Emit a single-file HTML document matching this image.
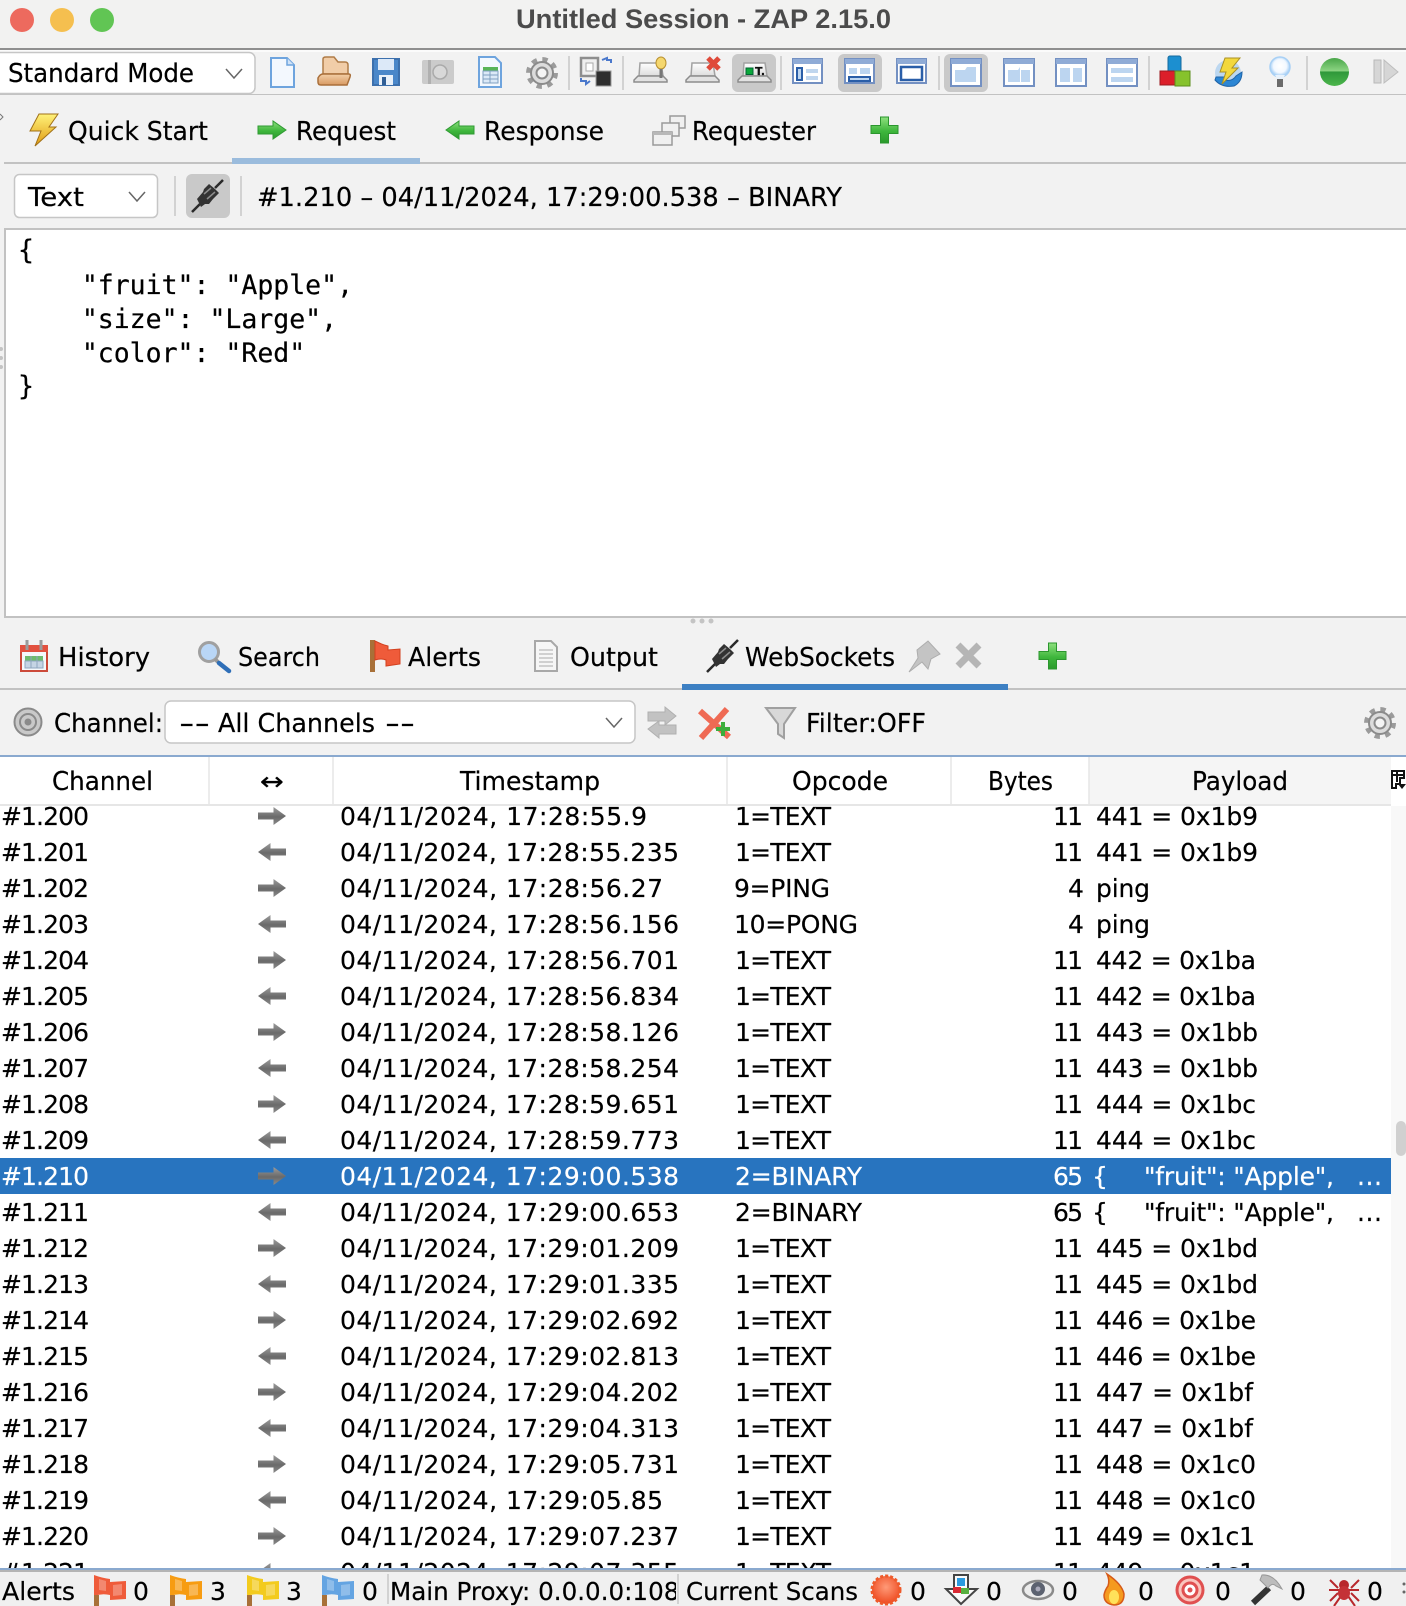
<!DOCTYPE html>
<html><head><meta charset="utf-8"><title>Untitled Session - ZAP 2.15.0</title>
<style>
html,body{margin:0;padding:0;background:#f2f2f2;width:1406px;height:1606px;overflow:hidden}
svg{display:block;position:absolute;left:0;top:0}
text{font-family:"DejaVu Sans","Liberation Sans",sans-serif;font-size:25px;fill:#000;stroke:#000;stroke-width:.2px;white-space:pre}
.t{font-size:26px}
.m{font-family:"DejaVu Sans Mono","Liberation Mono",monospace;font-size:26.5px;fill:#000}
.w text{fill:#fff;stroke:#fff}
</style></head><body>
<svg width="1406" height="1606" viewBox="0 0 1406 1606" xmlns="http://www.w3.org/2000/svg">
<defs>
<linearGradient id="gg" x1="0" y1="0" x2="0" y2="1"><stop offset="0" stop-color="#9c9c9c"/><stop offset=".55" stop-color="#6a6a6a"/><stop offset="1" stop-color="#8a8a8a"/></linearGradient>
<linearGradient id="gr" x1="0" y1="0" x2="0" y2="1"><stop offset="0" stop-color="#8fe07f"/><stop offset=".55" stop-color="#3eb63c"/><stop offset="1" stop-color="#2b9a2c"/></linearGradient>
<linearGradient id="fol" x1="0" y1="0" x2="0" y2="1"><stop offset="0" stop-color="#f3cfa8"/><stop offset="1" stop-color="#d89a62"/></linearGradient>
<linearGradient id="bolt" x1="0" y1="0" x2="0" y2="1"><stop offset="0" stop-color="#fff27a"/><stop offset="1" stop-color="#e09a10"/></linearGradient>
<linearGradient id="grn" x1="0" y1="0" x2="0" y2="1"><stop offset="0" stop-color="#49a649"/><stop offset=".46" stop-color="#8bd482"/><stop offset=".5" stop-color="#2f983a"/><stop offset="1" stop-color="#4cb64c"/></linearGradient>
<linearGradient id="lapg" x1="0" y1="0" x2="0" y2="1"><stop offset="0" stop-color="#fff"/><stop offset="1" stop-color="#dcdcdc"/></linearGradient>
<radialGradient id="bst" cx=".5" cy=".4" r=".6"><stop offset="0" stop-color="#ff9a78"/><stop offset="1" stop-color="#ee4a20"/></radialGradient>
<radialGradient id="bulb" cx=".5" cy=".45" r=".55"><stop offset="0" stop-color="#fff"/><stop offset=".6" stop-color="#f2f8ff"/><stop offset="1" stop-color="#8ec2f2"/></radialGradient>
<g id="R"><path d="M0 5.500H15.500V0L28 9 15.500 18V12.500H0Z" fill="url(#gg)"/></g>
<g id="L"><path d="M28 5.500H12.500V0L0 9 12.500 18V12.500H28Z" fill="url(#gg)"/></g>
<g id="plus"><path d="M10.500 1H18.500V9.500H28V17.500H18.500V27H10.500V17.500H1V9.500H10.500Z" fill="url(#gr)" stroke="#2b962e" stroke-width="1"/></g>
<g id="gear"><circle cx="16" cy="16" r="13" fill="none" stroke="#9b9b9b" stroke-width="6" stroke-dasharray="5 5.200"/><circle cx="16" cy="16" r="11" fill="#dcdcdc" stroke="#8b8b8b" stroke-width="2"/><circle cx="16" cy="16" r="5.500" fill="#f4f4f4" stroke="#8b8b8b" stroke-width="2"/></g>
<g id="plug"><path d="M1 33L9 25M32 1L24 9" stroke="#2a2a2a" stroke-width="2.500"/><path d="M6 20L12 13 13 10 18 5 24 10 28 14 22 20 18 25 14 25 10 28Z" fill="#333"/><path d="M13 15L20 9M16 20L24 13" stroke="#8d8d8d" stroke-width="1.500"/></g>
<g id="lap"><path d="M6 1H27L29 14H5Z" fill="url(#lapg)" stroke="#a2a2a2" stroke-width="1.500"/><path d="M4 14H29L33 18V20H0V18Z" fill="#e2e2e2" stroke="#8c8c8c" stroke-width="1.500"/></g>
<g id="lay"><rect x="1" y="1" width="29" height="24" fill="#fff" stroke="#7390c2" stroke-width="2"/><rect x="1" y="1" width="29" height="5" fill="#8fabd6"/></g>
<g id="lay2"><rect x="1" y="1" width="30" height="27" fill="#fff" stroke="#7390c2" stroke-width="2"/><rect x="1" y="1" width="30" height="5" fill="#8fabd6"/></g>
<g id="flagw"><path d="M5 4L12 6V16L5 15ZM19 10L28 9V20L19 21Z" fill="#fff" opacity=".28"/><rect x="0" y="20" width="5" height="11" fill="#a87038"/></g>
<path id="flagp" d="M0 0Q8 3 16 4V7L32 6V24L16 25V20Q8 18 0 21Z"/>
</defs>

<!-- title bar -->
<rect width="1406" height="48" fill="#f2f2f1"/>
<ellipse cx="22" cy="20" rx="12" ry="12" fill="#ed6a5e"/>
<ellipse cx="62" cy="20" rx="12" ry="12" fill="#f5bf4f"/>
<ellipse cx="102" cy="20" rx="12" ry="12" fill="#61c554"/>
<text x="516" y="28" textLength="375" lengthAdjust="spacingAndGlyphs" style="font-family:'Liberation Sans',sans-serif;font-weight:700;font-size:27px;fill:#4b4b4b;stroke:none">Untitled Session - ZAP 2.15.0</text>
<rect y="48" width="1406" height="2" fill="#8f8f8f"/>
<rect y="50" width="1406" height="2" fill="#fbfbfb"/>
<rect y="52" width="1406" height="42" fill="#f2f2f2"/>
<rect y="94" width="1406" height="1.500" fill="#c2c2c2"/>

<!-- mode select -->
<rect x="-6" y="52.500" width="261" height="41" rx="6" fill="#fff" stroke="#c6c6c6" stroke-width="1.500"/>
<text class="t" x="8" y="82" textLength="186" lengthAdjust="spacingAndGlyphs">Standard Mode</text>
<path d="M226 69L234 78 242 69" fill="none" stroke="#666" stroke-width="1.500"/>

<!-- toolbar selected backgrounds -->
<rect x="732" y="54" width="44" height="38" rx="6" fill="#c9c9c9"/>
<rect x="838" y="54" width="44" height="38" rx="6" fill="#c9c9c9"/>
<rect x="944" y="54" width="44" height="38" rx="6" fill="#c9c9c9"/>
<g stroke="#c8c8c8" stroke-width="1.500"><path d="M569 56V90M623 56V90M781 56V90M939 56V90M1149 56V90M1307 56V90"/></g>

<!-- toolbar icons -->
<path d="M271 58H287L294 65V87H271Z" fill="#f3f8fe" stroke="#6ea4de" stroke-width="2"/><path d="M287 58V65H294" fill="#cfe2f7" stroke="#6ea4de" stroke-width="1.500"/>
<path d="M323 59Q323 57 326 57H334L338 62H345Q348 62 348 65V74H323Z" fill="#f1cda8" stroke="#b07c48" stroke-width="1.500"/><path d="M318 78Q320 74 323 74H349Q351 74 350 77L347 85H321Q318 85 318 82Z" fill="url(#fol)" stroke="#a96f3a" stroke-width="1.500"/>
<path d="M373 59H399V85H373Z" fill="#4a87c9" stroke="#3c70ad" stroke-width="2"/><rect x="378" y="59" width="16" height="11" fill="#dce9f8"/><rect x="379" y="75" width="14" height="10" fill="#e8f0f9"/><rect x="382" y="77" width="4" height="8" fill="#2f5e96"/>
<rect x="422" y="60" width="32" height="24" rx="2" fill="#cbcbcb"/><rect x="428" y="60" width="3" height="24" fill="#b0b0b0"/><circle cx="440" cy="72" r="7" fill="#d8d8d8" stroke="#aaa" stroke-width="1.500"/>
<path d="M479 57H495L501 63V87H479Z" fill="#f3f8fe" stroke="#6ea4de" stroke-width="2"/><rect x="483" y="67" width="15" height="4" fill="#58b458"/><path d="M483 71H498V83H483ZM483 75H498M483 79H498M490 71V83" fill="#dbe9f7" stroke="#7f9fc0" stroke-width="1"/>
<use href="#gear" x="526" y="57"/>
<rect x="581" y="58" width="17" height="18" fill="#f0f0f0" stroke="#8e8e8e" stroke-width="2.500"/><rect x="586" y="63" width="7" height="8" fill="#fff" stroke="#aaa"/><rect x="596" y="71" width="15" height="15" fill="#2e2e2e" stroke="#9a9a9a"/><path d="M602 60L607 58V60H611V63M581 78V81H586V84L590 81" fill="none" stroke="#4a78cc" stroke-width="2"/>
<g transform="translate(634 62)"><use href="#lap"/><ellipse cx="27" cy="1" rx="5" ry="6" fill="#f5d76e" stroke="#b89030"/><rect x="25.500" y="7" width="3" height="9" fill="#777"/></g>
<g transform="translate(686 62)"><use href="#lap"/><path d="M22 -4L33 7M33 -4L22 7" stroke="#df4a3a" stroke-width="5"/></g>
<g transform="translate(738 62)"><use href="#lap"/><rect x="8" y="6" width="7" height="6.500" fill="#0aa83a" stroke="#063"/><text x="17" y="13" style="font-size:11px;font-weight:700;fill:#111">T.</text></g>
<g transform="translate(792 58)"><use href="#lay"/><rect x="5" y="10" width="5" height="12" fill="#bcd5f0" stroke="#2a5ea8" stroke-width="2"/><path d="M14 11H26V15H14ZM14 18H26V22H14Z" fill="#c0d6ee"/></g>
<g transform="translate(844 58)"><use href="#lay"/><path d="M5 10H13V16H5ZM16 10H26V16H16Z" fill="#bcd5f0"/><rect x="5" y="19" width="21" height="4" fill="#bcd5f0" stroke="#2a5ea8" stroke-width="2"/></g>
<g transform="translate(896 58)"><use href="#lay"/><rect x="5" y="9" width="21" height="13" fill="#fff" stroke="#2a5ea8" stroke-width="2.500"/></g>
<g transform="translate(950 58)"><use href="#lay2"/><path d="M5 12H15L17 9H26V24H5Z" fill="#bcd5f0"/></g>
<g transform="translate(1003 58)"><use href="#lay2"/><path d="M5 12H15L17 9V24H5ZM18 12H27V24H18Z" fill="#bcd5f0"/></g>
<g transform="translate(1055 58)"><use href="#lay2"/><path d="M5 10H15V24H5ZM18 10H27V24H18Z" fill="#bcd5f0"/></g>
<g transform="translate(1106 58)"><use href="#lay2"/><path d="M5 10H27V15H5ZM5 19H27V24H5Z" fill="#bcd5f0"/></g>
<rect x="1168" y="56" width="13" height="17" rx="2" fill="#1c8fd0" stroke="#156a9e"/><rect x="1160" y="71" width="15" height="14" fill="#dc1f2a" stroke="#9c1a20"/><rect x="1175" y="71" width="15" height="15" fill="#86c22c" stroke="#5c8f1c"/>
<circle cx="1228" cy="73" r="13" fill="#bcd7f0"/><path d="M1215 80Q1222 88 1234 86 1242 82 1242 72L1236 76Q1232 82 1224 80L1226 77H1216Z" fill="#2c86d4" stroke="#1f64a8"/><path d="M1225 58H1240L1232 68H1238L1222 84 1226 72H1220Z" fill="#f3d83d" stroke="#a99024"/>
<circle cx="1280" cy="67" r="10" fill="url(#bulb)" stroke="#a8d0f5" stroke-width="1.500"/><path d="M1275 75Q1277 78 1277 80H1283Q1283 78 1285 75Z" fill="#e8f2fc"/><rect x="1277" y="79" width="6" height="8" fill="#6b6b6b"/>
<ellipse cx="1334.500" cy="72" rx="14.500" ry="14" fill="url(#grn)"/>
<rect x="1374" y="60" width="7" height="23" fill="#d6d6d6" stroke="#b8b8b8"/><path d="M1384 60L1398 72 1384 83Z" fill="#d6d6d6" stroke="#bdbdbd"/>

<!-- top tabs -->
<rect y="95" width="1406" height="69" fill="#f2f2f2"/>
<path d="M0 114L3 117 0 120" fill="none" stroke="#777" stroke-width="1"/>
<path d="M39 114H58L49 127H56L35 146 41 131H30Z" fill="url(#bolt)" stroke="#a07018" stroke-width="1"/>
<text class="t" x="68" y="140" textLength="140" lengthAdjust="spacingAndGlyphs">Quick Start</text>
<path d="M258 126H273V121L286 130 273 139V134H258Z" fill="url(#gr)" stroke="#2f9a33" stroke-width="1"/>
<text class="t" x="296" y="140" textLength="100" lengthAdjust="spacingAndGlyphs">Request</text>
<path d="M474 126H459V121L446 130 459 139V134H474Z" fill="url(#gr)" stroke="#2f9a33" stroke-width="1"/>
<text class="t" x="484" y="140" textLength="120" lengthAdjust="spacingAndGlyphs">Response</text>
<g fill="#f0f0f0" stroke="#9a9a9a" stroke-width="1.500"><rect x="670" y="116" width="15" height="12"/><rect x="662" y="123" width="17" height="13"/><rect x="653" y="132" width="19" height="13"/></g><rect x="653" y="132" width="19" height="3" fill="#b8b8b8"/>
<text class="t" x="692" y="140" textLength="124" lengthAdjust="spacingAndGlyphs">Requester</text>
<use href="#plus" x="870" y="116"/>
<rect x="4" y="162" width="1402" height="2" fill="#c2c2c2"/>
<rect x="232" y="158" width="188" height="6" fill="#9bbcdd"/>

<!-- sub toolbar -->
<rect x="14.500" y="174.500" width="143" height="43" rx="5" fill="#fff" stroke="#c6c6c6" stroke-width="1.500"/>
<text class="t" x="28" y="206" textLength="56" lengthAdjust="spacingAndGlyphs">Text</text>
<path d="M129 192L137 201 145 192" fill="none" stroke="#666" stroke-width="1.500"/>
<path d="M175 176V216M241 176V216" stroke="#c8c8c8" stroke-width="1.500"/>
<rect x="186" y="174" width="44" height="44" rx="6" fill="#c9c9c9"/>
<use href="#plug" x="191" y="179"/>
<text class="t" x="257" y="206" textLength="585" lengthAdjust="spacingAndGlyphs">#1.210 – 04/11/2024, 17:29:00.538 – BINARY</text>

<!-- editor -->
<rect x="5" y="229" width="1402" height="388" fill="#fff" stroke="#c2c2c2" stroke-width="2"/>
<text class="m" x="18" y="259">{</text>
<text class="m" x="18" y="294">    "fruit": "Apple",</text>
<text class="m" x="18" y="328">    "size": "Large",</text>
<text class="m" x="18" y="362">    "color": "Red"</text>
<text class="m" x="18" y="395">}</text>
<g fill="#c4c4c4"><circle cx="1" cy="349" r="2"/><circle cx="1" cy="358" r="2"/><circle cx="1" cy="367" r="2"/><circle cx="693" cy="621" r="2.500"/><circle cx="702" cy="621" r="2.500"/><circle cx="711" cy="621" r="2.500"/></g>

<!-- bottom tabs -->
<rect x="21" y="646" width="26" height="25" fill="#f4f8fb" stroke="#cc4a3a" stroke-width="2"/><rect x="20" y="645" width="28" height="7" fill="#e2513f"/><rect x="25" y="656" width="18" height="5" fill="#6ebb6e"/><path d="M25 661H43V668H25ZM31 656V668M37 656V668" fill="#c5d4e4" stroke="#8fa6bf" stroke-width="1"/><path d="M27 640V650M41 640V650" stroke="#9b9b9b" stroke-width="3"/>
<text class="t" x="58" y="666" textLength="92" lengthAdjust="spacingAndGlyphs">History</text>
<circle cx="209" cy="652" r="9.500" fill="#b9d6f6" stroke="#a0a0a0" stroke-width="3"/><path d="M215 659L218 662" stroke="#999" stroke-width="4"/><path d="M219 663L229 671" stroke="#2f6fb8" stroke-width="4.500" stroke-linecap="round"/>
<text class="t" x="238" y="666" textLength="82" lengthAdjust="spacingAndGlyphs">Search</text>
<rect x="370" y="640" width="5" height="32" fill="#a87038"/><path d="M375 641Q383 645 388 646V650L400 649V664L386 666V660Q381 658 375 660Z" fill="#ef5b3a" stroke="#d2401f" stroke-width="1"/>
<text class="t" x="408" y="666" textLength="73" lengthAdjust="spacingAndGlyphs">Alerts</text>
<path d="M535 641H551L557 647V671H535Z" fill="#f6f6f6" stroke="#a8a8a8" stroke-width="2"/><path d="M539 650H553M539 654H553M539 658H553M539 662H553M539 666H553" stroke="#c4c4c4" stroke-width="1.500"/>
<text class="t" x="570" y="666" textLength="88" lengthAdjust="spacingAndGlyphs">Output</text>
<use href="#plug" x="706" y="639"/>
<text class="t" x="745" y="666" textLength="150" lengthAdjust="spacingAndGlyphs">WebSockets</text>
<path d="M917 650L928 641 940 654 931 659 928 669 922 662 909 672 918 658Z" fill="#c4c4c4" stroke="#adadad"/>
<path d="M958 645L979 666M979 645L958 666" stroke="#b5b5b5" stroke-width="7"/>
<use href="#plus" x="1038" y="642"/>
<rect y="688" width="1406" height="2" fill="#c2c2c2"/>
<rect x="682" y="684" width="326" height="6" fill="#3d80c3"/>

<!-- filter row -->
<circle cx="28" cy="722" r="13.500" fill="#c9c9c9" stroke="#8a8a8a" stroke-width="2"/><circle cx="28" cy="722" r="8" fill="none" stroke="#8a8a8a" stroke-width="2"/><circle cx="28" cy="722" r="3.500" fill="#8a8a8a"/>
<text class="t" x="54" y="732" textLength="109" lengthAdjust="spacingAndGlyphs">Channel:</text>
<rect x="165" y="701" width="470" height="42" rx="6" fill="#fff" stroke="#c6c6c6" stroke-width="1.500"/>
<text class="t" x="179" y="732" textLength="31" lengthAdjust="spacingAndGlyphs">--</text><text class="t" x="218" y="732" textLength="157" lengthAdjust="spacingAndGlyphs">All Channels</text><text class="t" x="385" y="732" textLength="30" lengthAdjust="spacingAndGlyphs">--</text>
<path d="M606 718L614 727 622 718" fill="none" stroke="#666" stroke-width="1.500"/>
<path d="M648 712H665V707L676 716 665 725V721H648ZM676 725H659V721L648 729 659 738V734H676Z" fill="#c2c2c2" stroke="#b0b0b0"/>
<path d="M700 711L729 737M727 709L701 738" stroke="#ef6a54" stroke-width="6"/><rect x="716" y="727" width="14" height="4" fill="#3cae3c"/><rect x="721" y="722" width="4" height="14" fill="#3cae3c"/>
<path d="M766 708H795L784 724V738L778 734V724Z" fill="#d8d8d8" stroke="#a0a0a0" stroke-width="2"/>
<text class="t" x="806" y="732" textLength="120" lengthAdjust="spacingAndGlyphs">Filter:OFF</text>
<use href="#gear" x="1364" y="707"/>

<!-- table -->
<rect y="755" width="1406" height="813" fill="#fff"/>
<rect x="1391" y="806" width="15" height="762" fill="#f8f8f8"/>
<rect x="1089" y="757" width="302" height="47" fill="#f5f5f5"/>
<rect y="755" width="1406" height="2" fill="#8aa9cf"/>
<rect y="804" width="1391" height="2" fill="#e6e6e6"/>
<path d="M209 757V804M333 757V804M727 757V804M951 757V804M1089 757V804" stroke="#e6e6e6" stroke-width="1.500"/>
<text class="t" x="52" y="790" textLength="101" lengthAdjust="spacingAndGlyphs">Channel</text>
<text x="260" y="790" textLength="24" lengthAdjust="spacingAndGlyphs">↔</text>
<text class="t" x="460" y="790" textLength="140" lengthAdjust="spacingAndGlyphs">Timestamp</text>
<text class="t" x="792" y="790" textLength="96" lengthAdjust="spacingAndGlyphs">Opcode</text>
<text class="t" x="988" y="790" textLength="65" lengthAdjust="spacingAndGlyphs">Bytes</text>
<text class="t" x="1192" y="790" textLength="96" lengthAdjust="spacingAndGlyphs">Payload</text>
<path d="M1392 771H1404V778H1400V784H1396V788H1392ZM1392 775H1404M1397 771V782" fill="#fff" stroke="#111" stroke-width="2"/><path d="M1398 784H1406L1402 789Z" fill="#111"/>
<rect x="1396" y="1121" width="10" height="35" rx="5" fill="#d0d0d0"/>

<clipPath id="tb"><rect y="806" width="1406" height="762"/></clipPath>
<g clip-path="url(#tb)">
<rect y="1158" width="1391" height="36" fill="#2874bf"/>
<g id="rows">
<text x="1" y="825" textLength="88">#1.200</text><use href="#R" x="258" y="807"/><text x="340" y="825" textLength="307">04/11/2024, 17:28:55.9</text><text x="735" y="825" textLength="96">1=TEXT</text><text x="1053" y="825" textLength="30">11</text><text x="1096" y="825" textLength="162">441 = 0x1b9</text>
<text x="1" y="861" textLength="88">#1.201</text><use href="#L" x="258" y="843"/><text x="340" y="861" textLength="339">04/11/2024, 17:28:55.235</text><text x="735" y="861" textLength="96">1=TEXT</text><text x="1053" y="861" textLength="30">11</text><text x="1096" y="861" textLength="162">441 = 0x1b9</text>
<text x="1" y="897" textLength="88">#1.202</text><use href="#R" x="258" y="879"/><text x="340" y="897" textLength="323">04/11/2024, 17:28:56.27</text><text x="734" y="897" textLength="96">9=PING</text><text x="1068" y="897" textLength="15">4</text><text x="1096" y="897" textLength="54">ping</text>
<text x="1" y="933" textLength="88">#1.203</text><use href="#L" x="258" y="915"/><text x="340" y="933" textLength="339">04/11/2024, 17:28:56.156</text><text x="734" y="933" textLength="124">10=PONG</text><text x="1068" y="933" textLength="15">4</text><text x="1096" y="933" textLength="54">ping</text>
<text x="1" y="969" textLength="88">#1.204</text><use href="#R" x="258" y="951"/><text x="340" y="969" textLength="339">04/11/2024, 17:28:56.701</text><text x="735" y="969" textLength="96">1=TEXT</text><text x="1053" y="969" textLength="30">11</text><text x="1096" y="969" textLength="160">442 = 0x1ba</text>
<text x="1" y="1005" textLength="88">#1.205</text><use href="#L" x="258" y="987"/><text x="340" y="1005" textLength="339">04/11/2024, 17:28:56.834</text><text x="735" y="1005" textLength="96">1=TEXT</text><text x="1053" y="1005" textLength="30">11</text><text x="1096" y="1005" textLength="160">442 = 0x1ba</text>
<text x="1" y="1041" textLength="88">#1.206</text><use href="#R" x="258" y="1023"/><text x="340" y="1041" textLength="339">04/11/2024, 17:28:58.126</text><text x="735" y="1041" textLength="96">1=TEXT</text><text x="1053" y="1041" textLength="30">11</text><text x="1096" y="1041" textLength="162">443 = 0x1bb</text>
<text x="1" y="1077" textLength="88">#1.207</text><use href="#L" x="258" y="1059"/><text x="340" y="1077" textLength="339">04/11/2024, 17:28:58.254</text><text x="735" y="1077" textLength="96">1=TEXT</text><text x="1053" y="1077" textLength="30">11</text><text x="1096" y="1077" textLength="162">443 = 0x1bb</text>
<text x="1" y="1113" textLength="88">#1.208</text><use href="#R" x="258" y="1095"/><text x="340" y="1113" textLength="339">04/11/2024, 17:28:59.651</text><text x="735" y="1113" textLength="96">1=TEXT</text><text x="1053" y="1113" textLength="30">11</text><text x="1096" y="1113" textLength="160">444 = 0x1bc</text>
<text x="1" y="1149" textLength="88">#1.209</text><use href="#L" x="258" y="1131"/><text x="340" y="1149" textLength="339">04/11/2024, 17:28:59.773</text><text x="735" y="1149" textLength="96">1=TEXT</text><text x="1053" y="1149" textLength="30">11</text><text x="1096" y="1149" textLength="160">444 = 0x1bc</text>
<g class="w"><text x="1" y="1185" textLength="88">#1.210</text><use href="#R" x="258" y="1167"/><text x="340" y="1185" textLength="339">04/11/2024, 17:29:00.538</text><text x="735" y="1185" textLength="127">2=BINARY</text><text x="1053" y="1185" textLength="30">65</text><text x="1092" y="1185">{</text><text x="1144" y="1185" textLength="190">"fruit": "Apple",</text><text x="1357" y="1185" textLength="25">...</text></g>
<text x="1" y="1221" textLength="88">#1.211</text><use href="#L" x="258" y="1203"/><text x="340" y="1221" textLength="339">04/11/2024, 17:29:00.653</text><text x="735" y="1221" textLength="127">2=BINARY</text><text x="1053" y="1221" textLength="30">65</text><text x="1092" y="1221">{</text><text x="1144" y="1221" textLength="190">"fruit": "Apple",</text><text x="1357" y="1221" textLength="25">...</text>
<text x="1" y="1257" textLength="88">#1.212</text><use href="#R" x="258" y="1239"/><text x="340" y="1257" textLength="339">04/11/2024, 17:29:01.209</text><text x="735" y="1257" textLength="96">1=TEXT</text><text x="1053" y="1257" textLength="30">11</text><text x="1096" y="1257" textLength="162">445 = 0x1bd</text>
<text x="1" y="1293" textLength="88">#1.213</text><use href="#L" x="258" y="1275"/><text x="340" y="1293" textLength="339">04/11/2024, 17:29:01.335</text><text x="735" y="1293" textLength="96">1=TEXT</text><text x="1053" y="1293" textLength="30">11</text><text x="1096" y="1293" textLength="162">445 = 0x1bd</text>
<text x="1" y="1329" textLength="88">#1.214</text><use href="#R" x="258" y="1311"/><text x="340" y="1329" textLength="339">04/11/2024, 17:29:02.692</text><text x="735" y="1329" textLength="96">1=TEXT</text><text x="1053" y="1329" textLength="30">11</text><text x="1096" y="1329" textLength="160">446 = 0x1be</text>
<text x="1" y="1365" textLength="88">#1.215</text><use href="#L" x="258" y="1347"/><text x="340" y="1365" textLength="339">04/11/2024, 17:29:02.813</text><text x="735" y="1365" textLength="96">1=TEXT</text><text x="1053" y="1365" textLength="30">11</text><text x="1096" y="1365" textLength="160">446 = 0x1be</text>
<text x="1" y="1401" textLength="88">#1.216</text><use href="#R" x="258" y="1383"/><text x="340" y="1401" textLength="339">04/11/2024, 17:29:04.202</text><text x="735" y="1401" textLength="96">1=TEXT</text><text x="1053" y="1401" textLength="30">11</text><text x="1096" y="1401" textLength="157">447 = 0x1bf</text>
<text x="1" y="1437" textLength="88">#1.217</text><use href="#L" x="258" y="1419"/><text x="340" y="1437" textLength="339">04/11/2024, 17:29:04.313</text><text x="735" y="1437" textLength="96">1=TEXT</text><text x="1053" y="1437" textLength="30">11</text><text x="1096" y="1437" textLength="157">447 = 0x1bf</text>
<text x="1" y="1473" textLength="88">#1.218</text><use href="#R" x="258" y="1455"/><text x="340" y="1473" textLength="339">04/11/2024, 17:29:05.731</text><text x="735" y="1473" textLength="96">1=TEXT</text><text x="1053" y="1473" textLength="30">11</text><text x="1096" y="1473" textLength="160">448 = 0x1c0</text>
<text x="1" y="1509" textLength="88">#1.219</text><use href="#L" x="258" y="1491"/><text x="340" y="1509" textLength="323">04/11/2024, 17:29:05.85</text><text x="735" y="1509" textLength="96">1=TEXT</text><text x="1053" y="1509" textLength="30">11</text><text x="1096" y="1509" textLength="160">448 = 0x1c0</text>
<text x="1" y="1545" textLength="88">#1.220</text><use href="#R" x="258" y="1527"/><text x="340" y="1545" textLength="339">04/11/2024, 17:29:07.237</text><text x="735" y="1545" textLength="96">1=TEXT</text><text x="1053" y="1545" textLength="30">11</text><text x="1096" y="1545" textLength="159">449 = 0x1c1</text>
<text x="1" y="1581" textLength="88">#1.221</text><use href="#L" x="258" y="1563"/><text x="340" y="1581" textLength="339">04/11/2024, 17:29:07.355</text><text x="735" y="1581" textLength="96">1=TEXT</text><text x="1053" y="1581" textLength="30">11</text><text x="1096" y="1581" textLength="159">449 = 0x1c1</text>
</g>
</g>

<!-- status bar -->
<rect y="1568" width="1406" height="38" fill="#f0f0f0"/>
<rect y="1568" width="1406" height="2" fill="#8aa9cf"/>
<rect y="1570" width="1406" height="2" fill="#b4b4b4"/>
<text x="2" y="1600" textLength="73" lengthAdjust="spacingAndGlyphs">Alerts</text>
<g transform="translate(94 1575)"><use href="#flagp" fill="#ef5b3a"/><use href="#flagw"/></g><text x="133" y="1600" textLength="16">0</text>
<g transform="translate(170 1575)"><use href="#flagp" fill="#f79c12"/><use href="#flagw"/></g><text x="210" y="1600" textLength="15">3</text>
<g transform="translate(247 1575)"><use href="#flagp" fill="#f3cb1e"/><use href="#flagw"/></g><text x="286" y="1600" textLength="15">3</text>
<g transform="translate(322 1575)"><use href="#flagp" fill="#64a4e2"/><use href="#flagw"/></g><text x="362" y="1600" textLength="16">0</text>
<path d="M388 1574V1604" stroke="#c8c8c8" stroke-width="1.500"/>
<clipPath id="px"><rect x="388" y="1572" width="288" height="34"/></clipPath>
<g clip-path="url(#px)"><text x="390" y="1600" textLength="305" lengthAdjust="spacingAndGlyphs">Main Proxy: 0.0.0.0:1080</text></g>
<path d="M678 1574V1604" stroke="#c8c8c8" stroke-width="1.500"/>
<text x="686" y="1600" textLength="172" lengthAdjust="spacingAndGlyphs">Current Scans</text>
<circle cx="886" cy="1590" r="14" fill="url(#bst)" stroke="#ee5a2a" stroke-width="3" stroke-dasharray="3 2"/><text x="910" y="1600" textLength="16">0</text>
<path d="M954 1575H968V1589H977L961 1604 946 1589H954Z" fill="#fafafa" stroke="#444" stroke-width="2"/><rect x="957" y="1578" width="8" height="8" fill="#2a9ae0"/><rect x="953" y="1587" width="8" height="6" fill="#d92a34"/><rect x="961" y="1588" width="8" height="6" fill="#58b040"/><text x="986" y="1600" textLength="16">0</text>
<ellipse cx="1038" cy="1590" rx="15" ry="9" fill="#ececec" stroke="#8a8a8a" stroke-width="2.500"/><circle cx="1038" cy="1589" r="7" fill="#5c6270"/><circle cx="1038" cy="1589" r="2.500" fill="#aab"/><text x="1062" y="1600" textLength="16">0</text>
<path d="M1107 1574Q1122 1584 1124 1594Q1124 1605 1114 1605Q1104 1604 1104 1595Q1105 1590 1108 1586Q1110 1580 1107 1574Z" fill="#f59a1e" stroke="#d65a18" stroke-width="1.500"/><ellipse cx="1114" cy="1597" rx="5" ry="7" fill="#ffe15a"/><text x="1138" y="1600" textLength="16">0</text>
<circle cx="1190" cy="1590" r="13" fill="#f9c5bd" stroke="#e05050" stroke-width="3"/><circle cx="1190" cy="1590" r="7" fill="#fff" stroke="#e05050" stroke-width="3"/><circle cx="1190" cy="1590" r="2.500" fill="#e05050"/><text x="1215" y="1600" textLength="15">0</text>
<path d="M1253 1603L1269 1588" stroke="#333" stroke-width="6"/><path d="M1262 1575Q1274 1574 1282 1589L1276 1586Q1272 1582 1268 1588L1260 1580Z" fill="#bcbcbc" stroke="#999"/><text x="1290" y="1600" textLength="16">0</text>
<g stroke="#b8282c" stroke-width="2" fill="none"><path d="M1330 1580L1338 1588M1359 1580L1351 1588M1329 1590H1359M1330 1601L1338 1593M1359 1601L1351 1593M1334 1606L1341 1596M1355 1606L1348 1596"/></g><ellipse cx="1344" cy="1585" rx="5" ry="5" fill="#b8282c"/><ellipse cx="1344" cy="1593" rx="6" ry="7" fill="#c43236"/><text x="1367" y="1600" textLength="15">0</text>
<g fill="#666"><circle cx="1404" cy="1584" r="1.500"/><circle cx="1404" cy="1592" r="1.500"/></g>
</svg>
</body></html>
